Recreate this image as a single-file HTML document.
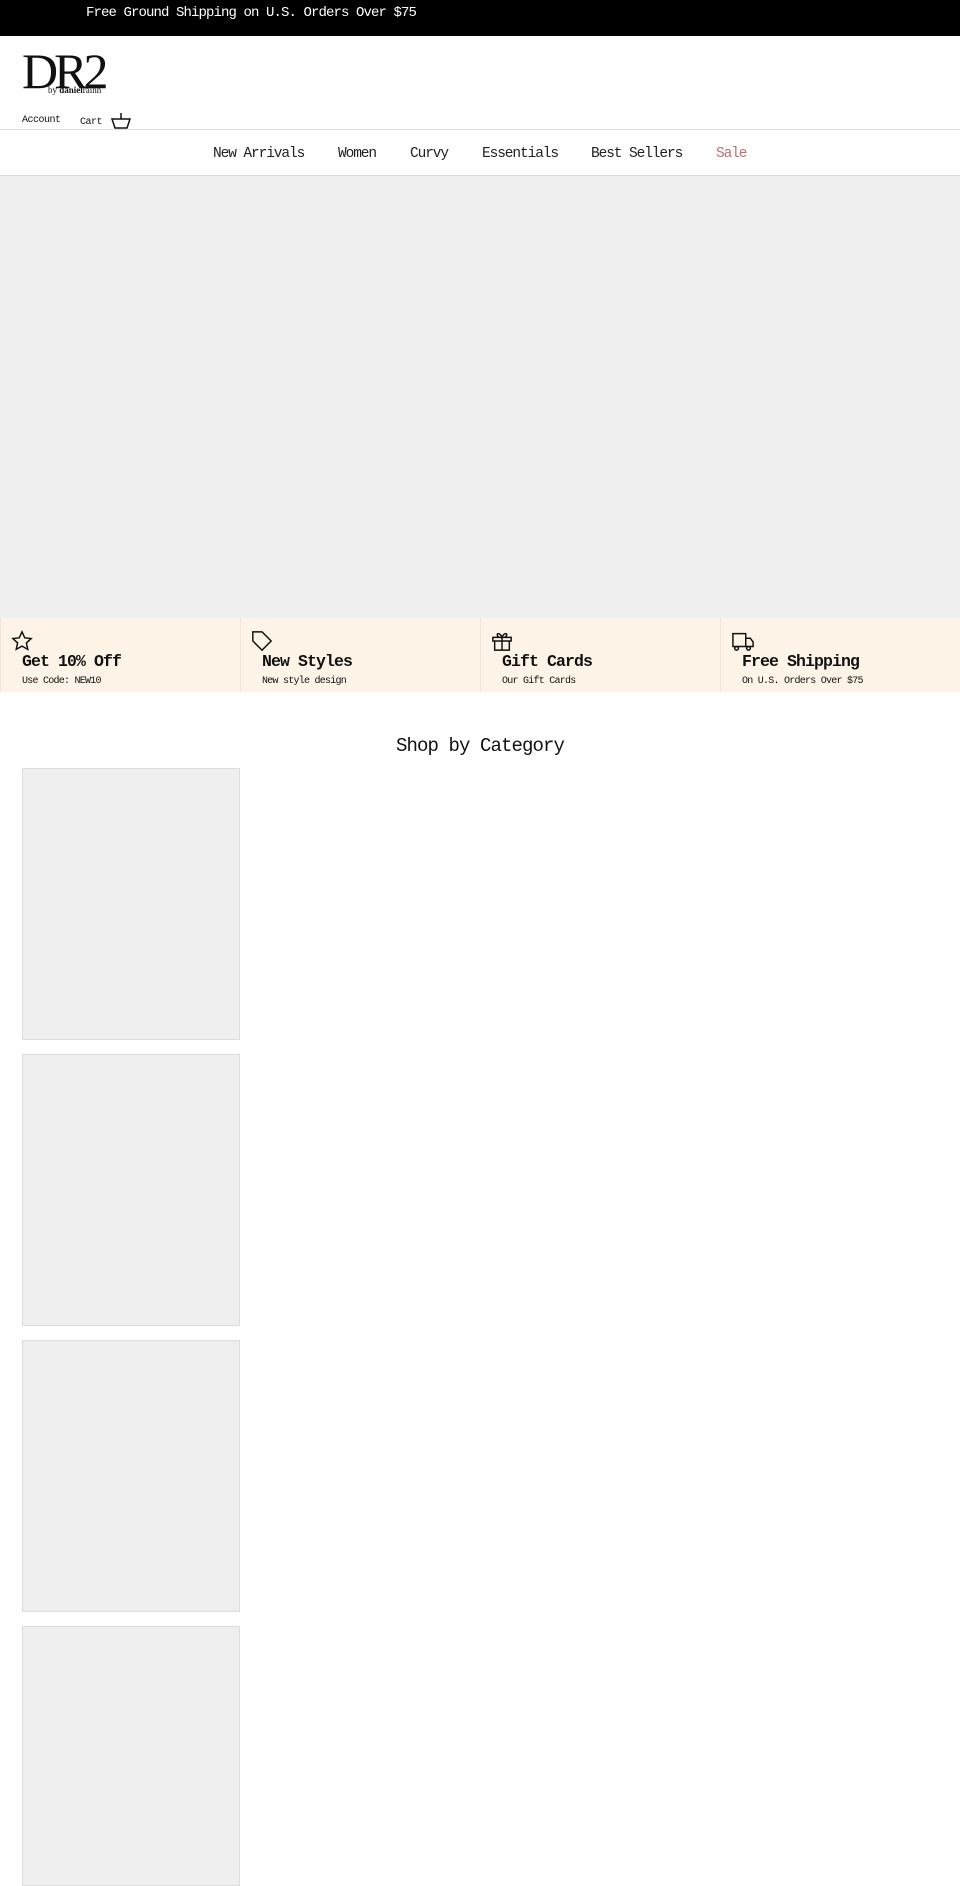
<!DOCTYPE html>
<html><head><meta charset="utf-8"><style>
*{margin:0;padding:0;box-sizing:border-box}
body{width:960px;height:1875px;overflow:hidden;background:#fff;font-family:"Liberation Mono",monospace;color:#111;position:relative}
.abs{position:absolute}
.top{left:0;top:0;width:960px;height:36px;background:#000;color:#fff;font-size:14px;letter-spacing:-0.9px}
.top span{position:absolute;left:86px;top:5px}
.nav a{position:absolute;top:146px;font-size:14.5px;letter-spacing:-1.1px;color:#222;text-decoration:none}
.feat{left:0;top:618px;width:960px;height:74px;background:#fdf3e6}
.col{position:absolute;top:0;width:240px;height:74px;border-left:1px solid #f3e6d6}
.col b{position:absolute;left:21px;top:34px;font-size:16.5px;letter-spacing:-0.9px}
.col small{position:absolute;left:21px;top:58px;font-size:10px;letter-spacing:-0.75px}
.col svg{position:absolute;left:10px;top:12px}
.box{left:22px;width:218px;height:272px;background:#efefef;border:1px solid #ddd}
</style></head><body>
<div class="abs top"><span>Free Ground Shipping on U.S. Orders Over $75</span></div>
<div class="abs" style="left:22px;top:46px;font-family:'Liberation Serif',serif;font-size:50px;letter-spacing:-4px;line-height:50px">DR2</div>
<div class="abs" style="left:48px;top:85px;font-family:'Liberation Serif',serif;font-size:9px">by <b>daniel</b>rainn</div>
<div class="abs" style="left:22px;top:115px;font-size:10px;letter-spacing:-0.5px">Account</div>
<div class="abs" style="left:80px;top:117px;font-size:10px;letter-spacing:-0.5px">Cart</div>
<svg class="abs" style="left:111px;top:112px" width="20" height="18" viewBox="0 0 20 18" fill="none" stroke="#111" stroke-width="1.5"><path d="M1 7h18l-3 9H4z"/><path d="M10 1v6"/></svg>
<div class="abs" style="left:0;top:129px;width:960px;height:1px;background:#ddd"></div>
<div class="nav">
<a style="left:213px">New Arrivals</a><a style="left:338px">Women</a><a style="left:410px">Curvy</a><a style="left:482px">Essentials</a><a style="left:591px">Best Sellers</a><a style="left:716px;color:#c07070">Sale</a>
</div>
<div class="abs" style="left:0;top:175px;width:960px;height:443px;background:#efefef;border-top:1px solid #ddd"></div>
<div class="abs feat">
<div class="col" style="left:0"><svg width="22" height="22" viewBox="0 0 24 24" fill="none" stroke="#111" stroke-width="1.6"><path d="M12 2l3 6.5 7 .8-5.2 4.8 1.5 7L12 17.6 5.7 21.1l1.5-7L2 9.3l7-.8z"/></svg><b>Get 10% Off</b><small>Use Code: NEW10</small></div>
<div class="col" style="left:240px"><svg width="22" height="22" viewBox="0 0 24 24" fill="none" stroke="#111" stroke-width="1.6"><path d="M2 2h10l10 10-10 10L2 12z"/></svg><b>New Styles</b><small>New style design</small></div>
<div class="col" style="left:480px"><svg width="22" height="22" viewBox="0 0 24 24" fill="none" stroke="#111" stroke-width="1.6"><path d="M2 8h20v4H2zM4 12h16v10H4zM12 8v14M12 8C10 3 6 3 7 6s5 2 5 2c0 0 4 1 5-2s-3-3-5 2"/></svg><b>Gift Cards</b><small>Our Gift Cards</small></div>
<div class="col" style="left:720px"><svg width="24" height="22" viewBox="0 0 26 24" fill="none" stroke="#111" stroke-width="1.6"><path d="M2 4h14v14H2zM16 9h5l3 4v5h-8"/><circle cx="6" cy="20" r="2"/><circle cx="19" cy="20" r="2"/></svg><b>Free Shipping</b><small>On U.S. Orders Over $75</small></div>
</div>
<div class="abs" style="left:0;width:960px;top:735px;text-align:center;font-size:19px;letter-spacing:-0.9px">Shop by Category</div>
<div class="abs box" style="top:768px"></div>
<div class="abs box" style="top:1054px"></div>
<div class="abs box" style="top:1340px"></div>
<div class="abs box" style="top:1626px;height:260px"></div>
</body></html>
